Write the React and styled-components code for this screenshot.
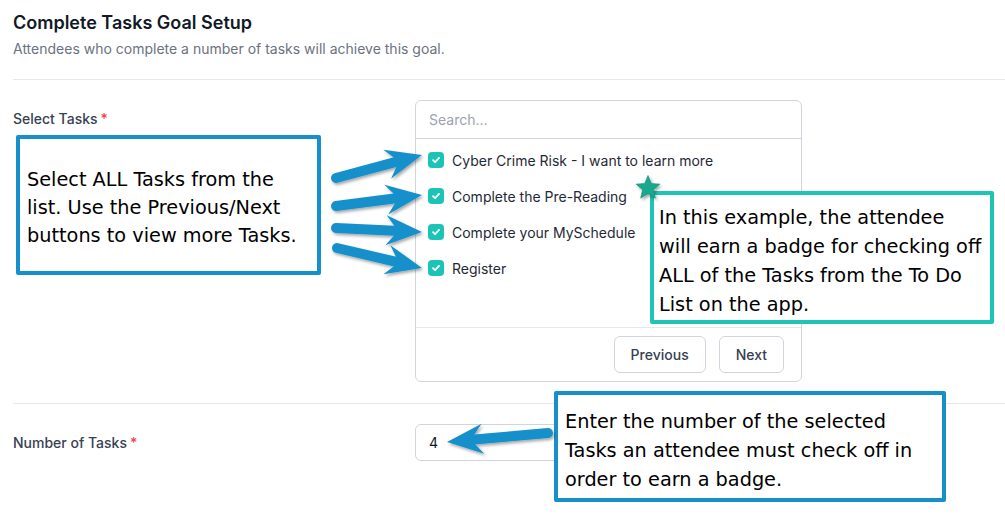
import React from "react";
import styled, { createGlobalStyle } from "styled-components";

const Global = createGlobalStyle`
  html, body { margin: 0; padding: 0; background: #fff; overflow: hidden; }
  body { font-family: Inter, "Noto Sans", sans-serif; -webkit-font-smoothing: antialiased; }
  * { box-sizing: border-box; }
`;

const Page = styled.div`
  position: relative;
  width: 1005px;
  height: 532px;
  padding-left: 13px;
`;

const Header = styled.div`
  padding: 9px 0 20px;
  border-bottom: 1px solid #e5e7eb;
`;

const Title = styled.h1`
  margin: 0;
  font-size: 18px;
  line-height: 28px;
  font-weight: 600;
  color: #111827;
`;

const Subtitle = styled.p`
  margin: 2px 0 0;
  font-size: 14px;
  line-height: 20px;
  color: #6b7280;
`;

const Row = styled.div`
  display: grid;
  grid-template-columns: 402px 387px;
  align-items: ${(p) => (p.$center ? "center" : "start")};
  padding: 20px 0 ${(p) => (p.$last ? "20px" : "21px")};
  border-bottom: ${(p) => (p.$last ? "none" : "1px solid #e5e7eb")};
`;

const Label = styled.label`
  font-size: 14px;
  line-height: 20px;
  font-weight: 500;
  color: #374151;
  padding-top: ${(p) => (p.$offset ? "9px" : "0")};
`;

const Req = styled.span`
  color: #ef4444;
  margin-left: 3px;
`;

const Panel = styled.div`
  border: 1px solid #d1d5db;
  border-radius: 6px;
  overflow: hidden;
`;

const Search = styled.div`
  height: 38px;
  display: flex;
  align-items: center;
  padding: 0 13px;
  font-size: 14px;
  color: #9ca3af;
  border-bottom: 1px solid #d1d5db;
`;

const List = styled.ul`
  list-style: none;
  margin: 0;
  padding: 3px 12px 0;
  height: 189px;
  border-bottom: 1px solid #e5e7eb;
`;

const Item = styled.li`
  height: 36px;
  display: flex;
  align-items: center;
  gap: 8px;
  font-size: 14px;
  color: #1f2937;
`;

const Check = styled.span`
  width: 16px;
  height: 16px;
  border-radius: 4px;
  background: #1cc4b8;
  display: flex;
  align-items: center;
  justify-content: center;
  flex: none;
`;

const Footer = styled.div`
  display: flex;
  justify-content: flex-end;
  gap: 13px;
  padding: 8px 17px 8px 0;
`;

const Button = styled.button`
  height: 37px;
  padding: 0 16px;
  border: 1px solid #d1d5db;
  border-radius: 6px;
  background: #fff;
  font-family: inherit;
  font-size: 14px;
  font-weight: 500;
  color: #374151;
`;

const NumberInput = styled.div`
  height: 37px;
  border: 1px solid #d1d5db;
  border-radius: 6px;
  display: flex;
  align-items: center;
  padding: 0 13px;
  font-size: 14px;
  color: #111827;
`;

const Callout = styled.div`
  position: absolute;
  left: ${(p) => p.$x}px;
  top: ${(p) => p.$y}px;
  width: ${(p) => p.$w}px;
  height: ${(p) => p.$h}px;
  border: 4px solid ${(p) => p.$color};
  border-radius: 2px;
  background: #fff;
  display: flex;
  align-items: center;
  padding: ${(p) => p.$pt}px 0 0 ${(p) => p.$pl}px;
  font-family: "DejaVu Sans", Verdana, sans-serif;
  font-size: 19.3px;
  line-height: ${(p) => p.$lh}px;
  color: #000;
  white-space: nowrap;
  overflow: hidden;
`;

const Overlay = styled.svg`
  position: absolute;
  left: 0;
  top: 0;
  width: 1005px;
  height: 532px;
  pointer-events: none;
`;

const CheckIcon = () => (
  <svg width="10" height="10" viewBox="0 0 10 10">
    <path d="M2 5.2 L4.1 7.2 L8 2.9" fill="none" stroke="#fff" strokeWidth="1.8" strokeLinecap="round" strokeLinejoin="round" />
  </svg>
);

function Arrow({ x1, y1, x2, y2 }) {
  const dx = x2 - x1;
  const dy = y2 - y1;
  const len = Math.hypot(dx, dy);
  const ux = dx / len;
  const uy = dy / len;
  const px = -uy;
  const py = ux;
  const headLen = 32;
  const headW = 15;
  const bx = x2 - ux * headLen;
  const by = y2 - uy * headLen;
  const notch = 8;
  const nx = bx + ux * notch;
  const ny = by + uy * notch;
  const head = [
    [x2, y2],
    [bx + px * headW - ux * 4, by + py * headW - uy * 4],
    [nx, ny],
    [bx - px * headW - ux * 4, by - py * headW - uy * 4],
  ]
    .map((p) => p.join(","))
    .join(" ");
  return (
    <g filter="url(#sh)">
      <line x1={x1} y1={y1} x2={nx + ux * 2} y2={ny + uy * 2} stroke="#1690cb" strokeWidth="10" strokeLinecap="round" />
      <polygon points={head} fill="#1690cb" />
    </g>
  );
}

function Star({ cx, cy, r }) {
  const pts = [];
  for (let i = 0; i < 10; i++) {
    const a = -Math.PI / 2 + (i * Math.PI) / 5;
    const rr = i % 2 === 0 ? r : r * 0.45;
    pts.push(`${cx + rr * Math.cos(a)},${cy + rr * Math.sin(a)}`);
  }
  return <polygon points={pts.join(" ")} fill="#13a98b" stroke="#0f8f76" strokeWidth="0.6" filter="url(#sh)" />;
}

const tasks = [
  "Cyber Crime Risk - I want to learn more",
  "Complete the Pre-Reading",
  "Complete your MySchedule",
  "Register",
];

export default function App() {
  return (
    <>
      <Global />
      <Page>
        <Header>
          <Title>Complete Tasks Goal Setup</Title>
          <Subtitle>Attendees who complete a number of tasks will achieve this goal.</Subtitle>
        </Header>
        <Row>
          <Label $offset>
            Select Tasks<Req>*</Req>
          </Label>
          <Panel>
            <Search>Search...</Search>
            <List>
              {tasks.map((t) => (
                <Item key={t}>
                  <Check>
                    <CheckIcon />
                  </Check>
                  {t}
                </Item>
              ))}
            </List>
            <Footer>
              <Button>Previous</Button>
              <Button>Next</Button>
            </Footer>
          </Panel>
        </Row>
        <Row $center $last>
          <Label>
            Number of Tasks<Req>*</Req>
          </Label>
          <NumberInput>4</NumberInput>
        </Row>

        <Callout $x={16} $y={135} $w={305} $h={140} $color="#1690cb" $pl={7} $pt={6} $lh={28}>
          <div>
            Select ALL Tasks from the
            <br />
            list. Use the Previous/Next
            <br />
            buttons to view more Tasks.
          </div>
        </Callout>
        <Callout $x={650} $y={191} $w={344} $h={133} $color="#1ec4b6" $pl={5} $pt={6} $lh={29}>
          <div>
            In this example, the attendee
            <br />
            will earn a badge for checking off
            <br />
            ALL of the Tasks from the To Do
            <br />
            List on the app.
          </div>
        </Callout>
        <Callout $x={554} $y={391} $w={392} $h={111} $color="#1690cb" $pl={7} $pt={8} $lh={29}>
          <div>
            Enter the number of the selected
            <br />
            Tasks an attendee must check off in
            <br />
            order to earn a badge.
          </div>
        </Callout>

        <Overlay viewBox="0 0 1005 532">
          <defs>
            <filter id="sh" x="-20%" y="-40%" width="140%" height="180%">
              <feDropShadow dx="1.5" dy="2" stdDeviation="1.6" floodColor="#000" floodOpacity="0.35" />
            </filter>
          </defs>
          <Arrow x1={336} y1={178} x2={422} y2={155} />
          <Arrow x1={336} y1={206} x2={422} y2={195} />
          <Arrow x1={336} y1={228} x2={422} y2={232} />
          <Arrow x1={337} y1={248} x2={422} y2={268} />
          <Arrow x1={548} y1={433} x2={447} y2={442} />
          <Star cx={648} cy={188} r={12.5} />
        </Overlay>
      </Page>
    </>
  );
}
